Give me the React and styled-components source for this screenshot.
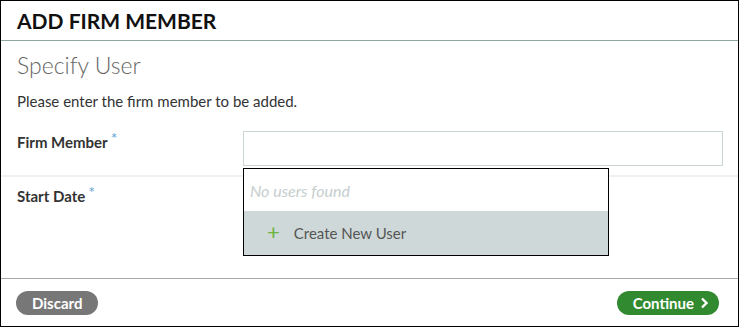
import React from 'react';
import styled, { createGlobalStyle } from 'styled-components';

const Global = createGlobalStyle`
  html, body {
    margin: 0;
    padding: 0;
    background: #fff;
  }
  body {
    font-family: Lato, "Open Sans", sans-serif;
    color: #333;
  }
`;

// styles
const Frame = styled.div`
  box-sizing: border-box;
  width: 739px;
  height: 327px;
  border: 1px solid #000;
  display: flex;
  flex-direction: column;
  background: #fff;
`;

const Header = styled.div`
  height: 39px;
  border-bottom: 1px solid #8fa8a0;
  padding: 0 16px;
  display: flex;
  align-items: center;

  h1 {
    margin: 0;
    font-size: 21px;
    font-weight: 700;
    color: #111;
  }
`;

const Body = styled.div`
  flex: 1;
  display: flex;
  flex-direction: column;
`;

const Intro = styled.div`
  padding: 10px 16px 0;

  h2 {
    margin: 0;
    font-size: 23px;
    font-weight: 300;
    color: #666;
    line-height: 28px;
  }

  p {
    margin: 12px 0 0;
    font-size: 15px;
    line-height: 20px;
    color: #333;
  }
`;

const Row = styled.div`
  display: flex;
  align-items: flex-start;
  padding: ${(p) => (p.first ? '20px 16px 9px' : '8px 16px')};
  border-bottom: ${(p) => (p.first ? '2px solid #eef2f4' : 'none')};
`;

const Label = styled.label`
  width: 226px;
  flex-shrink: 0;
  font-size: 15px;
  font-weight: 700;
  color: #333;
  line-height: 20px;
  padding-top: 1px;

  span {
    color: #6aa6d2;
    font-size: 16px;
    font-weight: 400;
    vertical-align: top;
    margin-left: 3px;
    position: relative;
    top: -4px;
  }
`;

const Field = styled.div`
  position: relative;
  flex: 1;
`;

const Input = styled.input`
  box-sizing: border-box;
  display: block;
  width: 480px;
  height: 35px;
  border: 1px solid #ccd6d6;
  background: #fff;
  outline: none;
  font-family: inherit;
  font-size: 14px;
  padding: 0 10px;
`;

const Dropdown = styled.div`
  position: absolute;
  top: 37px;
  left: 0;
  width: 366px;
  box-sizing: border-box;
  border: 1px solid #000;
  background: #fff;
  z-index: 2;
`;

const Empty = styled.div`
  height: 42px;
  display: flex;
  align-items: center;
  padding-left: 6px;
  font-size: 16px;
  font-style: italic;
  color: #c5cece;
`;

const Option = styled.div`
  height: 44px;
  background: #cfd8d8;
  display: flex;
  align-items: center;
  padding-left: 23px;
  font-size: 15px;
  color: #555;

  .plus {
    color: #6cb33f;
    font-size: 22px;
    font-weight: 400;
    margin-right: 14px;
    line-height: 1;
    position: relative;
    top: -1px;
  }
`;

const Footer = styled.div`
  height: 47px;
  border-top: 1px solid #a4a8a8;
  display: flex;
  align-items: center;
  justify-content: space-between;
  padding: 0 19px 0 15px;
`;

const Button = styled.button`
  height: 24px;
  border: none;
  border-radius: 12px;
  padding: ${(p) => (p.primary ? '0 10px 0 16px' : '0 16px')};
  background: ${(p) => (p.primary ? '#318a30' : '#777')};
  color: #fff;
  font-family: inherit;
  font-size: 15px;
  font-weight: 700;
  display: flex;
  align-items: center;
  gap: 6px;
  cursor: pointer;

  svg {
    width: 9px;
    height: 12px;
  }
`;

const App = () => {
  return (
    <>
      <Global />
      <Frame>
        <Header>
          <h1>ADD FIRM MEMBER</h1>
        </Header>
        <Body>
          <Intro>
            <h2>Specify User</h2>
            <p>Please enter the firm member to be added.</p>
          </Intro>
          <Row first>
            <Label>Firm Member<span>*</span></Label>
            <Field>
              <Input />
              <Dropdown>
                <Empty>No users found</Empty>
                <Option>
                  <span className="plus">+</span>
                  Create New User
                </Option>
              </Dropdown>
            </Field>
          </Row>
          <Row>
            <Label>Start Date<span>*</span></Label>
          </Row>
        </Body>
        <Footer>
          <Button>Discard</Button>
          <Button primary>
            Continue
            <svg viewBox="0 0 9 12">
              <path d="M2 1.5 L6.5 6 L2 10.5" stroke="#fff" strokeWidth="2.4" fill="none" />
            </svg>
          </Button>
        </Footer>
      </Frame>
    </>
  );
};

export default App;
